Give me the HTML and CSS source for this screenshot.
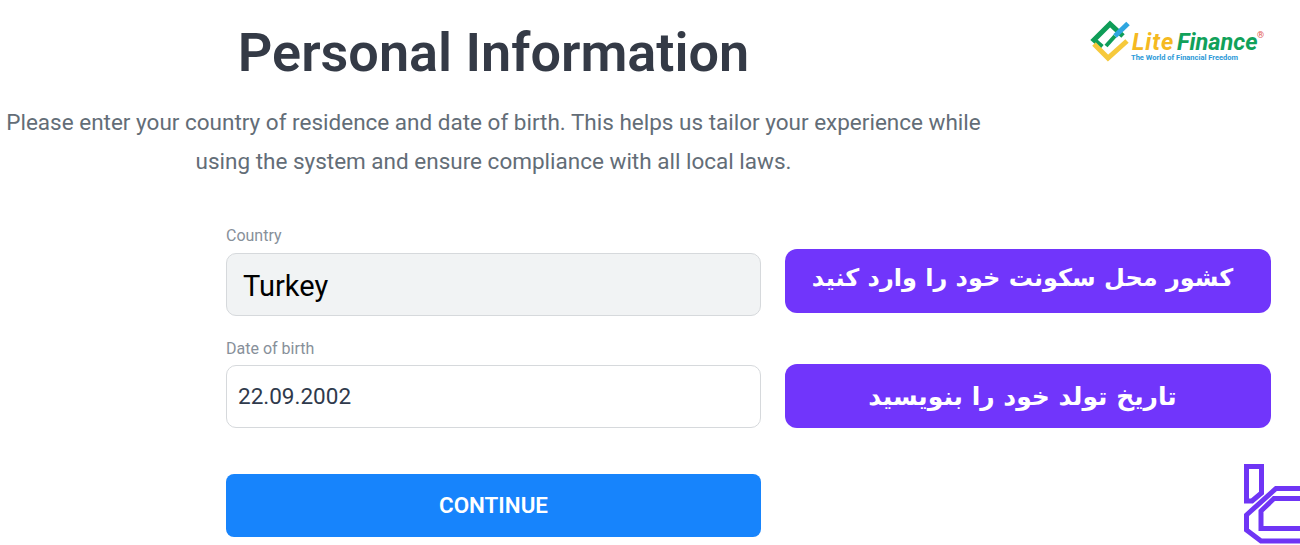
FILE: index.html
```html
<!DOCTYPE html>
<html lang="en">
<head>
<meta charset="utf-8">
<title>Personal Information</title>
<link rel="stylesheet" href="styles.css">
</head>
<body>
<div class="page">
  <header class="top">
    <div class="intro">
      <h1 class="title">Personal Information</h1>
      <p class="lead">Please enter your country of residence and date of birth. This helps us tailor your experience while using the system and ensure compliance with all local laws.</p>
    </div>
    <svg class="logo" viewBox="1080 10 190 60" width="190" height="60" aria-label="LiteFinance">
      <path d="M1102 47 L1094 40 L1110 24 L1123 36" class="logo-green"/>
      <path d="M1106 46 L1115 36" class="logo-green logo-thin"/>
      <path d="M1115 36 L1128 23.500" class="logo-blue"/>
      <path d="M1094 44 L1108 58 L1127 41" class="logo-yellow"/>
      <text y="50" class="logo-word"><tspan x="1132" class="logo-lite">Lite</tspan><tspan x="1177" class="logo-finance">Finance</tspan></text>
      <text x="1131" y="60" class="logo-tag">The World of Financial Freedom</text>
      <text x="1257" y="38" class="logo-reg">®</text>
    </svg>
  </header>
  <main class="form">
    <div class="row">
      <div class="field">
        <label class="label">Country</label>
        <div class="input input-disabled">Turkey</div>
      </div>
      <div class="note note-first" dir="rtl">کشور محل سکونت خود را وارد کنید</div>
    </div>
    <div class="row row-date">
      <div class="field">
        <label class="label">Date of birth</label>
        <div class="input input-date">22.09.2002</div>
      </div>
      <div class="note note-second" dir="rtl">تاریخ تولد خود را بنویسید</div>
    </div>
    <button class="continue" type="button">CONTINUE</button>
  </main>
  <svg class="mark" viewBox="1244 464 56 81" width="56" height="81" aria-hidden="true">
    <path d="M1246.500 466.500 H1261.500 V493 L1252 501 H1246.500 Z" class="mark-line"/>
    <path d="M1302 488.500 H1276 L1246.500 515 V530 L1261 541 H1302 M1302 498.500 H1274 L1261 511 V528.500 H1302" class="mark-line"/>
  </svg>
</div>
</body>
</html>
```
FILE: styles.css
```css
* { box-sizing: border-box; }
html, body { margin: 0; background: #fff; }
.page {
  position: relative;
  width: 1300px;
  height: 545px;
  overflow: hidden;
  font-family: Roboto, "Liberation Sans", sans-serif;
}
.top { display: flex; align-items: flex-start; height: 226px; }
.intro { width: 987px; text-align: center; padding-top: 20px; }
.title {
  margin: 0;
  font-size: 54px;
  line-height: 66px;
  font-weight: 600;
  color: #343a46;
}
.lead {
  margin: 17px 0 0;
  font-size: 22.500px;
  line-height: 39px;
  font-weight: 400;
  color: #636d77;
}
.logo { margin: 10px 0 0 93px; }
.logo-green, .logo-blue, .logo-yellow { fill: none; stroke-width: 5; }
.logo-green { stroke: #0f9d58; }
.logo-thin { stroke-width: 4; }
.logo-blue { stroke: #2ea6e0; }
.logo-yellow { stroke: #f6c93c; }
.logo-word { font: italic 700 23.500px Roboto, sans-serif; }
.logo-lite { fill: #f5b921; letter-spacing: 1px; }
.logo-finance { fill: #11a15a; }
.logo-tag { font: 700 7.500px Roboto, sans-serif; fill: #2c9ad8; }
.logo-reg { font: 400 9px Roboto, sans-serif; fill: #e2574c; }
.form { padding-left: 226px; }
.row {
  display: grid;
  grid-template-columns: 535px 486px;
  column-gap: 24px;
  align-items: end;
}
.row-date { margin-top: 22px; }
.label {
  display: block;
  font-size: 16px;
  line-height: 19px;
  margin-bottom: 8px;
  color: #87909a;
}
.row-date .label { margin-top: 1px; margin-bottom: 7px; }
.input {
  height: 63px;
  border: 1px solid #d6d9dc;
  border-radius: 10px;
  display: flex;
  align-items: center;
}
.input-disabled {
  background: #f1f3f4;
  padding-left: 16px;
  padding-top: 2px;
  font-size: 29px;
  color: #000;
}
.input-date {
  padding-left: 11px;
  padding-bottom: 2px;
  font-size: 22.500px;
  color: #2f3a4c;
}
.note {
  height: 64px;
  padding-right: 11px;
  background: #7135fb;
  border-radius: 12px;
  color: #fff;
  display: flex;
  align-items: center;
  justify-content: center;
  font-family: "DejaVu Sans", sans-serif;
  font-weight: 700;
  font-size: 24px;
}
.note-first { margin-bottom: 3px; padding-bottom: 6px; }
.note-second { font-size: 25px; }
.continue {
  display: block;
  margin-top: 46px;
  padding-bottom: 3px;
  width: 535px;
  height: 63px;
  border: 0;
  border-radius: 8px;
  background: #1784fc;
  color: #fff;
  font-family: Roboto, sans-serif;
  font-size: 22.400px;
  font-weight: 600;
}
.mark { position: absolute; right: 0; bottom: 0; }
.mark-line { fill: none; stroke: #6f35f5; stroke-width: 5; }
```
